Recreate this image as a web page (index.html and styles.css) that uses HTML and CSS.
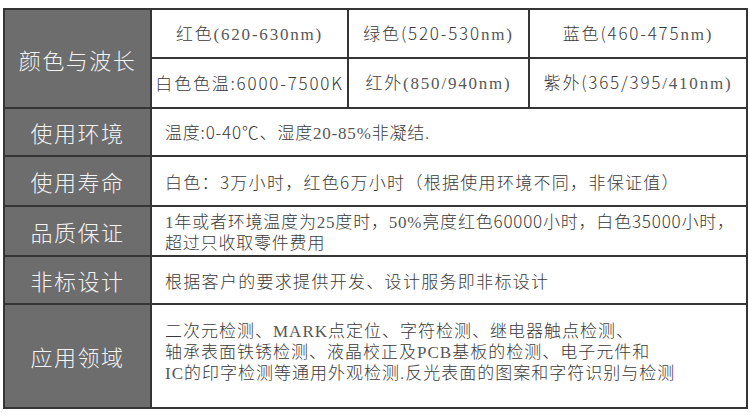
FILE: index.html
```html
<!DOCTYPE html>
<html lang="zh-CN">
<head>
<meta charset="utf-8">
<title>规格参数</title>
<link rel="stylesheet" href="styles.css">
</head>
<body>
<div class="spec">
  <div class="label tall">颜色与波长</div>
  <div class="cell"><div class="t">红色<span class="s">(620-630nm)</span></div></div>
  <div class="cell"><div class="t">绿色(520-530<span class="s">nm)</span></div></div>
  <div class="cell"><div class="t">蓝色(460-475<span class="s">nm)</span></div></div>
  <div class="cell"><div class="t">白色色温:6000-7500K</div></div>
  <div class="cell"><div class="t">红外<span class="s">(850/940nm)</span></div></div>
  <div class="cell"><div class="t">紫外(365/395<span class="s">/410nm)</span></div></div>

  <div class="label">使用环境</div>
  <div class="val r2"><div class="t">温度:0-40℃、湿度<span class="s">20-85%</span>非凝结.</div></div>

  <div class="label">使用寿命</div>
  <div class="val r3"><div class="t">白色：3万小时，红色6万小时（根据使用环境不同，非保证值）</div></div>

  <div class="label">品质保证</div>
  <div class="val r4"><div class="t"><span class="s">1</span>年或者环境温度为<span class="s">25</span>度时，<span class="s">50%</span>亮度红色60000小时，白色35000小时，<br>超过只收取零件费用</div></div>

  <div class="label">非标设计</div>
  <div class="val r5"><div class="t">根据客户的要求提供开发、设计服务即非标设计</div></div>

  <div class="label">应用领域</div>
  <div class="val r6"><div class="t">二次元检测、<span class="s">MARK</span>点定位、字符检测、继电器触点检测、<br>轴承表面铁锈检测、液晶校正及<span class="s">PCB</span>基板的检测、电子元件和<br><span class="s">IC</span>的印字检测等通用外观检测.反光表面的图案和字符识别与检测</div></div>
</div>
</body>
</html>
```

FILE: styles.css
```css
html, body {
  margin: 0;
  padding: 0;
  background: #ffffff;
}

body {
  font-family: "Noto Sans CJK SC", "Noto Sans", sans-serif;
  font-weight: 300;
  color: #3a3a3a;
}

.spec {
  box-sizing: border-box;
  width: 745px;
  margin: 8px 0 0 3px;
  padding: 2px;
  display: grid;
  grid-template-columns: 145px 195px 179px 216px;
  grid-template-rows: 47px 48px 46px 48px 48px 46px 102px;
  gap: 2px;
  background: #353535;
}

.s {
  font-family: "Liberation Serif", "Noto Sans CJK SC", serif;
  font-weight: 400;
  color: #575757;
}

.t {
  white-space: nowrap;
}

.label {
  background: #6d6d6d;
  color: #f4f4f4;
  font-size: 22px;
  letter-spacing: 1.5px;
  line-height: 24px;
  display: flex;
  align-items: center;
  justify-content: center;
}

.label.tall {
  grid-row: span 2;
}

.cell {
  background: #ffffff;
  font-size: 17px;
  letter-spacing: 1.8px;
  line-height: 20px;
  display: flex;
  align-items: center;
  justify-content: center;
}

.val {
  grid-column: span 3;
  background: #ffffff;
  font-size: 17px;
  line-height: 19px;
  letter-spacing: 0.8px;
  padding-left: 13px;
  display: flex;
  align-items: center;
}

.val.r3 {
  letter-spacing: 1.3px;
}

.val.r5 {
  letter-spacing: 1.3px;
}

.val.r6 {
  align-items: flex-start;
  padding-top: 15px;
  letter-spacing: 1px;
}
```
